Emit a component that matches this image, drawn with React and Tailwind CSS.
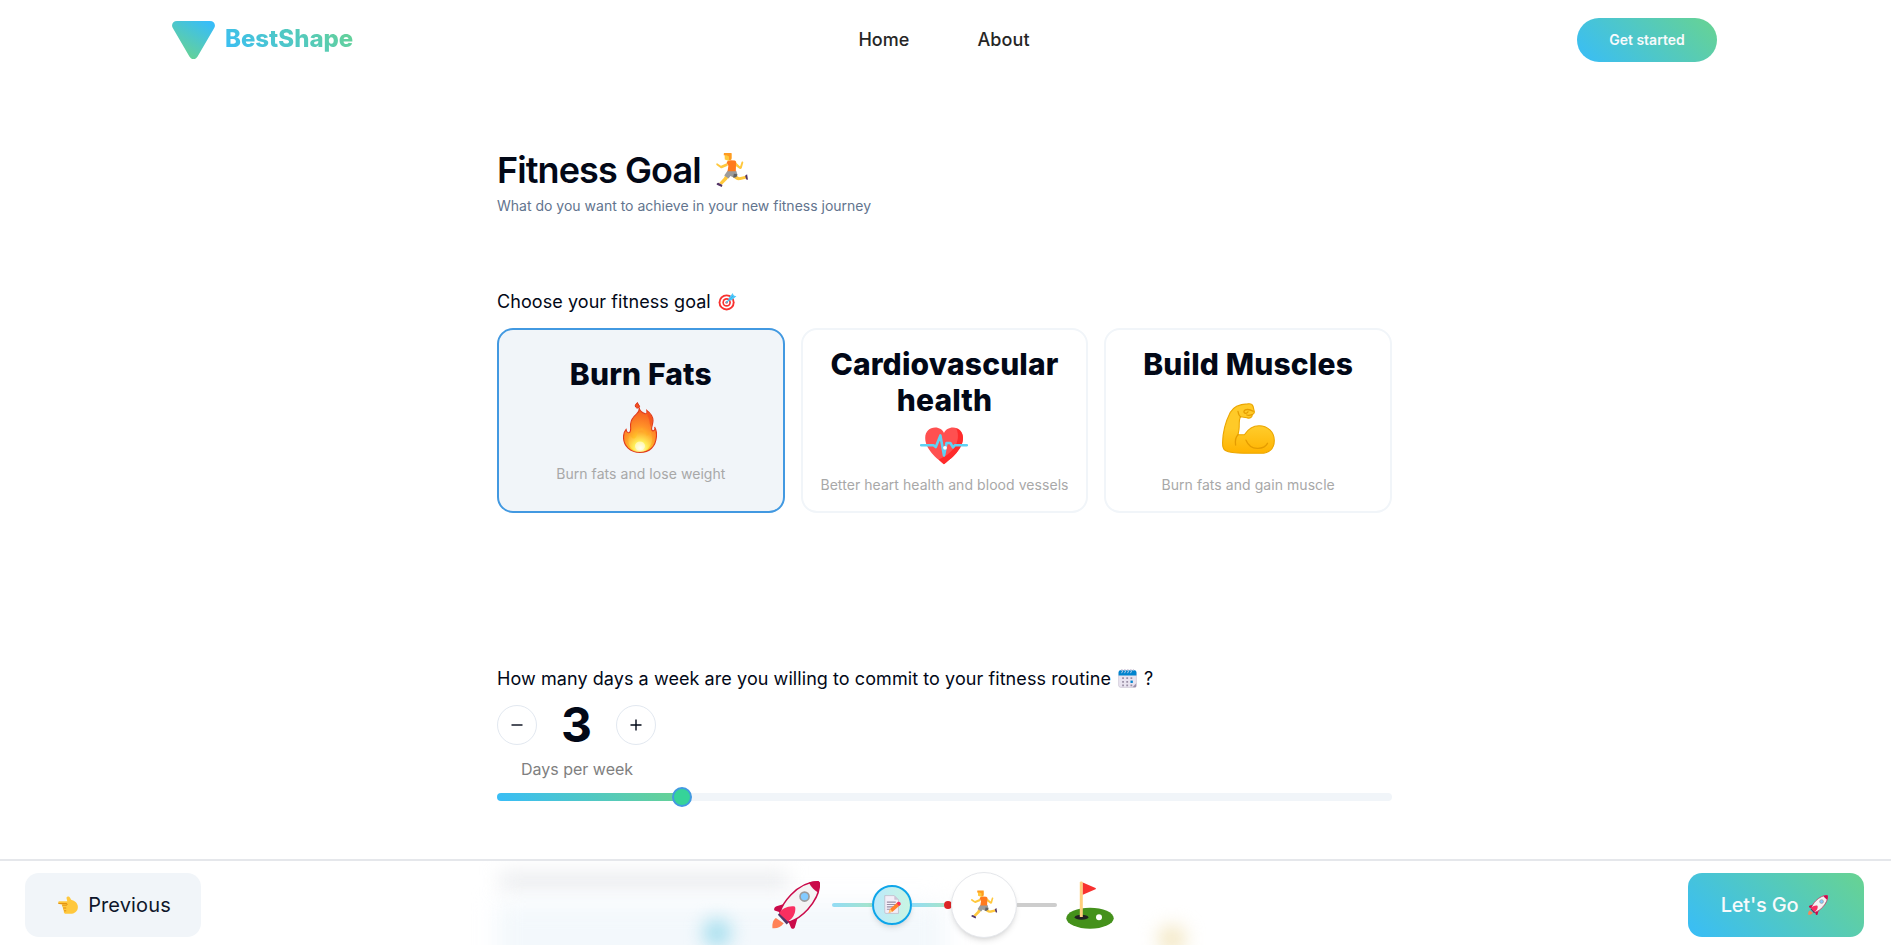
import React from "react";

function Runner({ className }) {
  return (
    <svg viewBox="0 0 32 32" className={className}>
      <path d="M18 19 L21.5 22.2 C22.2 22.8 23 22.9 24 22.7 L29 21.5 L29.6 24 L24 25.4 C22 25.8 20.6 25.4 19.2 24.4 L14.5 21z" fill="#ffc83d" />
      <path d="M10.5 19.5 L14 21.5 L11 25.5 L6.5 29.8 L4 28.2 L8.3 23.6z" fill="#ffc83d" />
      <path d="M11.8 16.6 L20 16.6 L21 20 C21 22.3 19.4 23.6 17.5 23 L14.6 21.6 L12.7 24 L8.7 21.2z" fill="#9b9b9b" />
      <path d="M17.8 19.5 L21 20 C21 22.6 19 23.6 17 22.8z" fill="#636363" />
      <path d="M11.5 9.4 L5.6 12 L2.3 9.8 C1.2 9.4 .8 11 1.7 11.6 L5.2 14.1 C5.8 14.4 6.4 14.3 7 14 L12 12z" fill="#ffc83d" />
      <path d="M18 7.3 L23.6 12.6 L25 8.4 C25.7 7.7 26.8 8.3 26.6 9.2 L25.2 14.2 C24.8 15.1 23.9 15.3 23.1 14.8 L17.8 11z" fill="#ffc83d" />
      <path d="M11 9.2 C11.6 7.2 13 6.7 15 6.8 L18.5 7 C20 7.4 20.2 8.6 19.8 10 L19.6 17.2 L11.8 17.2 L12.6 12z" fill="#ff7a1f" />
      <path d="M9 .9 H15.4 V6 L13.2 7.5 L9.2 6z" fill="#ffc83d" />
      <path d="M8.4 0 H15.6 V4.6 C15.6 6.2 14.3 6.8 13.2 6.7 V3.2 L11 2.2 L8.2 2.2z" fill="#ff9b21" />
      <path d="M3.2 28 L7 30.1 L6.4 32 L1.7 29.8 C1.2 29.1 2 28 3.2 28z" fill="#533566" />
      <path d="M28.3 21.4 L30.2 20 L31 24.9 C30.5 25.6 29.4 25.2 29.2 24.2z" fill="#533566" />
    </svg>
  );
}

function Target({ className }) {
  return (
    <svg viewBox="0 0 32 32" className={className}>
      <circle cx="14.5" cy="17.5" r="13.5" fill="#f8312f" />
      <circle cx="14.5" cy="17.5" r="10.3" fill="#fff" />
      <circle cx="14.5" cy="17.5" r="7.2" fill="#f8312f" />
      <circle cx="14.5" cy="17.5" r="4.4" fill="#fff" />
      <circle cx="14.5" cy="17.5" r="2" fill="#f8312f" />
      <path d="M14 18 L24 8" stroke="#26c9fc" strokeWidth="2" strokeLinecap="round" />
      <path d="M18 10 L25 1.5 L26.2 5.8 L31 7 L23 14 L18 14.5z" fill="#50c8fa" />
      <path d="M19 13.5 L26.2 5.8" stroke="#2ba3e4" strokeWidth="1" />
    </svg>
  );
}

function Flame({ className }) {
  return (
    <svg viewBox="0 0 34 51" className={className}>
      <defs>
        <radialGradient id="flameOuter" cx=".5" cy=".9" r=".9">
          <stop offset="0" stopColor="#fff176" />
          <stop offset=".28" stopColor="#ffca28" />
          <stop offset=".55" stopColor="#ff9028" />
          <stop offset="1" stopColor="#f4511e" />
        </radialGradient>
        <radialGradient id="flameInner" cx=".5" cy=".85" r=".7">
          <stop offset="0" stopColor="#fffde7" />
          <stop offset=".4" stopColor="#ffee58" />
          <stop offset="1" stopColor="#ffa62b" />
        </radialGradient>
      </defs>
      <path d="M14.5 .6 C13 1.5 11.6 3.5 12.6 5 C13.6 6.6 16 6.4 16.5 4.8 C16.8 3.4 14.9 2.6 14.5 .6z" fill="#f4511e" stroke="#d9301a" />
      <path d="M16.3 5.5 C16.4 8 17.8 9.6 20 10.8 C21.2 11.6 22.5 12 23.4 11.4 C24.2 10.8 24 9.3 23.8 8.4 C26.5 10.4 30 14.2 30 18.6 C30 21.3 28.8 24 28.6 26.3 C28.5 28 29.3 29.5 31 28.5 C32 27.9 32 26.2 31.6 25 C33.3 27.4 33.8 31 33.4 35 C32.6 44.5 26.6 50.4 17 50.4 C7.2 50.4 .5 44 .5 35 C.5 32 1.4 29.3 3.1 27.4 C3.5 29.5 4.5 31.2 6.3 30.6 C8.6 29.6 7.3 25.6 7.6 22.1 C8 17.6 10.5 14.7 13.4 12.2 C15.4 10.5 16.5 8.2 16.3 5.5z" fill="url(#flameOuter)" stroke="#e03b1d" strokeWidth="1.1" />
      <path d="M23.8 9 C28.5 13 30.3 17.2 28.9 21 L28 25 C26.2 22 27.1 18 24.8 14.5z" fill="#f4511e" opacity=".8" />
      <path d="M19.3 26 C19.7 30 22.2 31.1 23.8 34 C26 33.5 26.7 31.6 26.8 29.6 C29.2 33 30 37.2 28.4 41.2 C26.3 46.5 22.6 49.7 17 49.7 C10 49.7 5.1 45 5.4 38 C5.6 36 6 34.2 7 32.4 C7.7 35 9.6 37.2 11.8 36.2 C14.8 34.7 13 29.5 19.3 26z" fill="url(#flameInner)" />
      <ellipse cx="17" cy="44" rx="5" ry="4.5" fill="#fff" opacity=".5" />
    </svg>
  );
}

function Heart({ className }) {
  return (
    <svg viewBox="0 0 48 38" className={className}>
      <path d="M24 37.3 C21 34.5 5.2 24 5.2 11 C5.2 4.6 9.7 .6 15.2 .6 C19.4 .6 22.6 3 24 6 C25.4 3 28.8 .6 33 .6 C38.5 .6 43 4.6 43 11 C43 24 27 34.5 24 37.3z" fill="#ff5050" />
      <path d="M36.3 1.2 C40.4 2.7 43 6.3 43 11 C43 24 27 34.5 24 37.3 C22.5 35.8 20.5 34.2 18.6 32.4 C31.5 27.5 42.2 15 36.3 1.2z" fill="#ff2b2b" />
      <path d="M1.2 18.2 H13.5 L15.8 20 L20.4 8.4 L24 28.5 L26.5 16 H30.3 L33 20.4 L35 18.2 H46.8" fill="none" stroke="#5fd2f3" strokeWidth="2.6" strokeLinecap="round" strokeLinejoin="round" />
      <circle cx="25" cy="20.8" r="1.9" fill="#fff" />
    </svg>
  );
}

function Muscle({ className }) {
  return (
    <svg viewBox="0 0 53 51" className={className}>
      <defs>
        <linearGradient id="skin" x1="0" y1="0" x2="0" y2="1">
          <stop offset=".5" stopColor="#ffca28" />
          <stop offset="1" stopColor="#ffb300" />
        </linearGradient>
      </defs>
      <path d="M25.5 .9 C28.2 .4 30.4 1 31.1 3.5 L32.4 9.1 C32.4 10.5 31.5 11.1 30.2 11.7 C30.3 14.3 28 15.7 25.4 14.9 C24 14.6 21.8 14.1 18.6 13.7 C17.2 15.4 17.2 19 17.2 23 C17.3 26.5 16.6 29.5 16 31.7 H22.4 C26 26.3 31 22.8 37 22.8 C45.6 22.8 52.3 29 52.3 37.5 C52.3 46 46.8 50.3 39 50.3 H22 C14 50.3 7 49.6 3.4 47.6 C.4 45.9 .5 43 .6 39.5 C.8 29.5 3.7 18.5 8.2 9.6 C10.8 4.6 17 1.2 25.5 .9z" fill="url(#skin)" stroke="#eba600" strokeWidth="1.1" />
      <path d="M16 8.5 C16.6 11.7 17.2 12.9 18.6 13.7 M26 8.8 C24.3 11.2 21.3 10.5 22.1 8 C23 5.9 27.5 6 31.2 8.2 M30.2 11.7 C28 12.4 26.2 12.6 24.8 12 M16 31.7 C13.5 34 13.1 38 13.6 42 M24 37.2 C26.5 43 31 45.7 36 45.4 C40.2 45.2 43.8 43.2 45.5 40.3" fill="none" stroke="#e59c00" strokeWidth="1.3" strokeLinecap="round" />
    </svg>
  );
}

function Calendar({ className }) {
  return (
    <svg viewBox="0 0 32 32" className={className}>
      <path d="M1 7 H31 V24 L24 31 H5 C2.5 31 1 29.5 1 27z" fill="#e9e4f0" stroke="#c6bed0" />
      <path d="M31 24 L24 31 H28 C30 31 31 29.5 31 28z" fill="#9b8fab" />
      <path d="M1 11 V5.5 C1 3 2.5 2 5 2 H27 C29.5 2 31 3 31 5.5 V11z" fill="#0084ce" />
      <path d="M5 1.5 H27" stroke="#cdc4d6" strokeWidth="2" strokeDasharray="3 2" />
      <path d="M6 7 l2-4 M11 7 l2-4 M16 7 l2-4 M21 7 l2-4" stroke="#e9e4f0" strokeWidth="1.3" />
      <path d="M7 14 h3v3H7zM14 14h3v3h-3zM21 14h3v3h-3zM7 20h3v3H7zM14 20h3v3h-3zM7 26h3v3H7zM14 26h3v3h-3zM21 26h3v3h-3z" fill="#998ea4" />
      <path d="M21 19.5h4v4h-4z" fill="#0084ce" />
    </svg>
  );
}

function Rocket({ className }) {
  return (
    <svg viewBox="0 0 32 32" className={className}>
      <path d="M2.6 24.6 C.2 26.2 .1 29.4 .3 31.5 C3.5 31.9 6 30.6 7.8 28.2z" fill="#ff8257" />
      <path d="M8 15.4 L3 16.8 C1.3 17.6 .9 19.4 2.2 19.8 L5.8 21z" fill="#ca0b4a" />
      <path d="M17.2 24.2 L15.2 31 C14.6 32.4 13 32 12.6 31 L10.8 26.6z" fill="#ca0b4a" />
      <path d="M30.8 .5 C25 .4 18 3.6 12.5 9.3 C8.8 13.2 6.3 17.2 5.3 20.9 L11.4 27.4 C16 25.9 20 23.2 23.8 19 C28.9 13.3 32 6.7 31.5 1.2z" fill="#f4f4f4" stroke="#ca0b4a" strokeWidth="1" />
      <path d="M24.6 1.2 C27.5 0 31 0 31.5 .8 C32 2.2 31.6 5.2 30.7 7.7 C28.5 6.3 25.9 4 24.6 1.2z" fill="#ca0b4a" />
      <path d="M5.3 21 L11.2 27.5 L9.8 29 L3.9 22.5z" fill="#533566" />
      <path d="M15 17 C15.9 17.2 15.6 20.2 15.1 21.5 C14.3 24 12.5 26 10.6 27 L4.8 21.6 C6.3 18.5 10.8 16.4 15 17z" fill="#f92f60" />
      <circle cx="21.7" cy="10.4" r="3" fill="#83cbff" stroke="#9b9b9b" strokeWidth="1.1" />
    </svg>
  );
}

function Memo({ className }) {
  return (
    <svg viewBox="0 0 32 32" className={className}>
      <path d="M3 1 H19 L26 8 V31 H5 Q3 31 3 29z" fill="#f3eef8" stroke="#b4acbc" strokeWidth="1" />
      <path d="M19 1 V8 H26z" fill="#cdc4d6" />
      <path d="M6.5 12 H21.5 M6.5 16 H21.5 M6.5 20 H17 M6.5 24 H12" stroke="#998ea4" strokeWidth="1.7" />
      <path d="M9.5 30 L11.8 23.5 L24.5 12.4 L29 17 L16 28.3z" fill="#ff822d" />
      <path d="M9.5 30 L11.8 23.5 L16 28.3z" fill="#ffce7c" />
      <path d="M22.8 14 L25.5 11.5 C28 10.6 30.6 13.2 29.7 15.8 L27.2 18.6z" fill="#f92f60" />
    </svg>
  );
}

function Golf({ className }) {
  return (
    <svg viewBox="0 0 48 48" className={className}>
      <ellipse cx="24" cy="37.2" rx="23.7" ry="10.5" fill="#44911b" />
      <ellipse cx="15.5" cy="36.2" rx="6.8" ry="2.5" fill="#212121" />
      <path d="M13.8 1.5 C13.8 0 16.8 0 16.8 1.5 V36 H13.8z" fill="#ffce7c" />
      <path d="M16.8 1.6 L29.5 7 Q30.5 7.7 29.5 8.3 L16.8 13.7z" fill="#f8312f" />
      <circle cx="33" cy="36.3" r="3" fill="#fff" />
    </svg>
  );
}

function PointLeft({ className }) {
  return (
    <svg viewBox="0 0 32 28" className={className}>
      <path d="M13.5 2.2 C14.5 -.3 17.8 -.3 19.3 2.4 L21 5.5 C27 7.2 31.8 11 31.8 17 C31.8 24 26.5 28 19.5 28 H13 C9.5 28 8.5 25 10 23.2 C8 22.4 7.4 20.4 8.6 18.6 C6.4 17.5 6.2 15.3 7.2 13.5 L2 12.3 C-.5 11.5 -.2 8 2.3 8 H14.8z" fill="#ffc83d" />
      <path d="M1 11.5 H13 C15 11.5 15.3 13.8 13.7 14.2 H7 M8.6 18.8 H12.5 M10 23.3 H12.5" fill="none" stroke="#d67d00" strokeWidth="1.2" strokeLinecap="round" />
    </svg>
  );
}

function Header() {
  return (
    <header className="ml-[172px] grid h-20 w-[1545px] grid-cols-3 items-center">
      <div className="flex items-center gap-[10px]">
        <svg viewBox="0 0 43 38" className="h-[38px] w-[43px]">
          <defs>
            <linearGradient id="mark" x1="1" y1="0" x2=".3" y2="1">
              <stop offset="0.1" stopColor="#38bdf8" />
              <stop offset="1" stopColor="#68d391" />
            </linearGradient>
          </defs>
          <path d="M5 0 H38 C42 0 44.2 3.6 42.2 7 L25.6 35.4 C23.7 38.8 19.3 38.8 17.4 35.4 L.8 7 C-1.2 3.6 1 0 5 0z" fill="url(#mark)" />
        </svg>
        <span className="mt-[-3px] bg-[linear-gradient(45deg,#38bdf8,#68d391)] bg-clip-text text-2xl font-extrabold text-transparent">BestShape</span>
      </div>
      <nav className="mr-px flex justify-center gap-[68px] text-lg font-medium tracking-[0.004em] text-[#262626]">
        <a>Home</a>
        <a>About</a>
      </nav>
      <button className="h-11 w-[140px] justify-self-end rounded-full bg-[linear-gradient(45deg,#38bdf8,#68d391)] text-sm font-semibold text-slate-50">Get started</button>
    </header>
  );
}

function GoalCard({ title, text, selected, children }) {
  return (
    <div className={`flex h-[185px] flex-col items-center rounded-2xl border-2 px-4 text-center ${selected ? "border-[#4299e1] bg-slate-100 pt-[26px]" : "border-slate-100 pt-4"}`}>
      <h3 className="text-3xl font-extrabold tracking-[0.005em]">{title}</h3>
      {children}
      <p className="text-sm tracking-[0.004em] whitespace-nowrap text-[#a8a8a8]">{text}</p>
    </div>
  );
}

function RoundButton({ plus }) {
  return (
    <button className="flex size-10 items-center justify-center rounded-full border border-slate-200">
      <svg viewBox="0 0 12 12" className="size-3" stroke="#020817" strokeWidth="1.4">
        <path d={plus ? "M.5 6 H11.5 M6 .5 V11.5" : "M.5 6 H11.5"} />
      </svg>
    </button>
  );
}

function Progress() {
  return (
    <div className="flex items-center">
      <Rocket className="size-12" />
      <div className="ml-[12px] h-1 w-10 rounded-l-full bg-linear-to-r from-[#93dcf5] to-[#a5e4cb]" />
      <div className="flex size-10 items-center justify-center rounded-full border-2 border-[#0ea5e9] bg-linear-to-r from-[#bce9fa] to-[#c9f5e2] shadow-md">
        <Memo className="size-[19px]" />
      </div>
      <div className="h-1 w-8 bg-linear-to-r from-[#93dcf5] to-[#a5e4cb]" />
      <div className="-mr-px size-2 rounded-full bg-[#dc2626]" />
      <div className="flex size-[66px] items-center justify-center rounded-full border border-gray-200 bg-white shadow-md">
        <Runner className="h-[31px] w-7" />
      </div>
      <div className="mr-[9px] h-1 w-10 rounded-r-full bg-[#cdcdcd]" />
      <Golf className="size-12" />
    </div>
  );
}

function BottomBar() {
  return (
    <footer className="absolute inset-x-0 bottom-0 h-[86px] overflow-hidden border-t-2 border-gray-200 bg-white">
      <div className="absolute top-3 left-[500px] h-4 w-[288px] bg-gray-300/50 blur-[10px]" />
      <div className="absolute top-[42px] left-[497px] h-20 w-[448px] bg-[#f3f8fc] blur-[12px]" />
      <div className="absolute top-[58px] left-[703px] size-7 rounded-full bg-[#a5deee] blur-[9px]" />
      <div className="absolute top-[66px] left-[1160px] size-6 rounded-full bg-[#efdfae] blur-[10px]" />
      <div className="relative flex h-full items-center justify-between pr-[27px] pl-[25px]">
        <button className="mt-3 mb-2 flex h-16 w-44 items-center justify-center gap-[10px] rounded-[14px] bg-slate-100 pl-[3px] text-xl tracking-[0.006em] text-slate-900">
          <PointLeft className="h-[18px] w-5" />
          Previous
        </button>
        <div className="mt-[3px] mr-[3px]"><Progress /></div>
        <button className="mt-3 mb-2 flex h-16 w-44 items-center justify-center gap-[10px] rounded-[14px] bg-[linear-gradient(45deg,#38bdf8,#68d391)] pr-[3px] text-xl font-medium tracking-[-0.01em] text-slate-50">
          Let's Go
          <Rocket className="size-5" />
        </button>
      </div>
    </footer>
  );
}

export default function App() {
  return (
    <div className="relative h-[945px] overflow-hidden bg-white font-['Inter',sans-serif] text-[#020817]">
      <Header />
      <main className="ml-[497px] w-[895px] pt-[70px]">
        <h1 className="flex items-center gap-[14px] text-4xl font-semibold tracking-tight">
          Fitness Goal
          <Runner className="h-9 w-[34px]" />
        </h1>
        <p className="mt-1.5 text-sm text-slate-500">What do you want to achieve in your new fitness journey</p>

        <section className="mt-[72px]">
          <div className="flex items-center gap-[7px] text-lg tracking-[0.004em]">
            Choose your fitness goal
            <Target className="mt-[-2px] size-[19px]" />
          </div>
          <div className="mt-3 grid grid-cols-3 gap-4">
            <GoalCard title="Burn Fats" text="Burn fats and lose weight" selected>
              <Flame className="mt-[10px] mr-px mb-[11px] h-[51px] w-[34px]" />
            </GoalCard>
            <GoalCard title="Cardiovascular health" text="Better heart health and blood vessels">
              <Heart className="mt-[9px] mb-[10px] h-[38px] w-12" />
            </GoalCard>
            <GoalCard title="Build Muscles" text="Burn fats and gain muscle">
              <Muscle className="mt-[21px] mb-[21px] h-[51px] w-[53px]" />
            </GoalCard>
          </div>
        </section>

        <section className="mt-[152px]">
          <div className="flex items-center gap-[7px] text-lg tracking-[0.004em]">
            How many days a week are you willing to commit to your fitness routine
            <Calendar className="mt-[-2px] size-[19px]" />
            ?
          </div>
          <div className="mt-3 flex w-[159px] items-center justify-between">
            <RoundButton />
            <span className="text-5xl leading-10 font-bold">3</span>
            <RoundButton plus />
          </div>
          <p className="mt-3 w-40 text-center text-[#808080]">Days per week</p>
          <div className="mt-[6px] flex h-5 items-center">
            <div className="h-2 w-[185px] rounded-l-full bg-[linear-gradient(45deg,#38bdf8,#68d391)]" />
            <div className="z-10 -mx-2.5 size-5 rounded-full border-2 border-[#4299e1] bg-[#36d399]" />
            <div className="h-2 flex-1 rounded-r-full bg-slate-100" />
          </div>
        </section>
      </main>
      <BottomBar />
    </div>
  );
}
